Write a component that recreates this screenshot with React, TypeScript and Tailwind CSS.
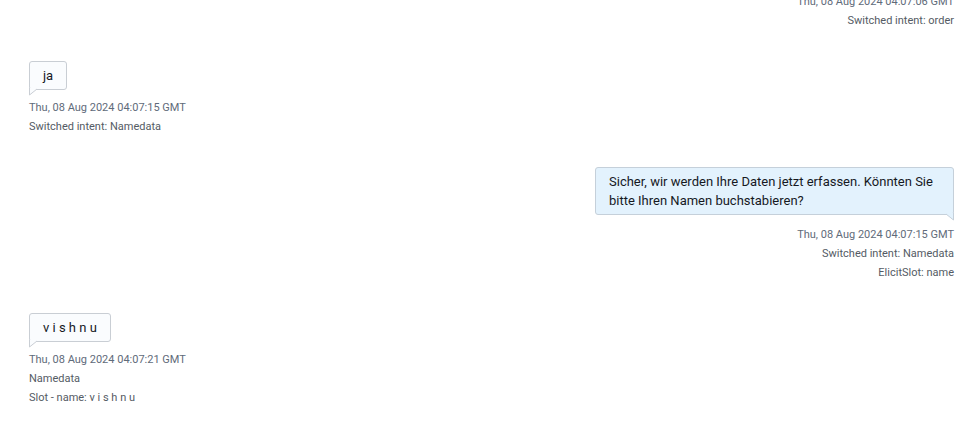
import React from "react";

type Msg = {
  side: "left" | "right";
  text?: string;
  meta: string[];
};

const messages: Msg[] = [
  { side: "right", meta: ["Thu, 08 Aug 2024 04:07:06 GMT", "Switched intent: order"] },
  { side: "left", text: "ja", meta: ["Thu, 08 Aug 2024 04:07:15 GMT", "Switched intent: Namedata"] },
  {
    side: "right",
    text: "Sicher, wir werden Ihre Daten jetzt erfassen. Könnten Sie bitte Ihren Namen buchstabieren?",
    meta: ["Thu, 08 Aug 2024 04:07:15 GMT", "Switched intent: Namedata", "ElicitSlot: name"],
  },
  { side: "left", text: "v i s h n u", meta: ["Thu, 08 Aug 2024 04:07:21 GMT", "Namedata", "Slot - name: v i s h n u"] },
];

// little speech-bubble tail hanging off the bottom corner
function Tail({ side }: { side: "left" | "right" }) {
  if (side === "left") {
    return (
      <svg width="10" height="8" viewBox="0 0 10 8" className="absolute top-full -mt-[1px] -left-[1px]">
        <polygon points="0.5,0 0.5,7 8,1 8,0" fill="#fafcfe" />
        <polyline points="0.5,0 0.5,7 8,1" fill="none" stroke="#c9ced4" strokeWidth="1" />
      </svg>
    );
  }
  return (
    <svg width="10" height="8" viewBox="0 0 10 8" className="absolute top-full -mt-[1px] -right-[1px]">
      <polygon points="9.5,0 9.5,7 2,1 2,0" fill="#e3f2fd" />
      <polyline points="9.5,0 9.5,7 2,1" fill="none" stroke="#c5d0da" strokeWidth="1" />
    </svg>
  );
}

function Message({ msg, first }: { msg: Msg; first?: boolean }) {
  const isLeft = msg.side === "left";
  return (
    <div className={`flex flex-col ${isLeft ? "items-start" : "items-end"} ${first ? "-mt-[8px]" : ""}`}>
      {msg.text && (
        <div
          className={`relative rounded-[3px] border text-[13px] leading-[19px] text-[#16191f] ${
            isLeft
              ? "border-[#c9ced4] bg-[#fafcfe] px-[13px] py-[4px]"
              : "max-w-[359px] border-[#c5d0da] bg-[#e3f2fd] px-[13px] py-[4px]"
          }`}
        >
          {msg.text}
          <Tail side={msg.side} />
        </div>
      )}
      <div
        className={`flex flex-col text-[11px] leading-[19px] ${isLeft ? "items-start" : "items-end"} ${
          msg.text ? (isLeft ? "mt-[8px]" : "mt-[10px]") : ""
        }`}
      >
        {msg.meta.map((m, i) => (
          <span key={i} className={i === 0 ? "text-[#5f6b7a]" : "text-[#545b64]"}>
            {m}
          </span>
        ))}
      </div>
    </div>
  );
}

export default function App() {
  return (
    <div
      className="h-[426px] w-[973px] overflow-hidden bg-white pl-[29px] pr-[19px]"
      style={{ fontFamily: "Roboto, 'Liberation Sans', sans-serif" }}
    >
      <div className="flex flex-col gap-[31px]">
        {messages.map((m, i) => (
          <Message key={i} msg={m} first={i === 0} />
        ))}
      </div>
    </div>
  );
}
